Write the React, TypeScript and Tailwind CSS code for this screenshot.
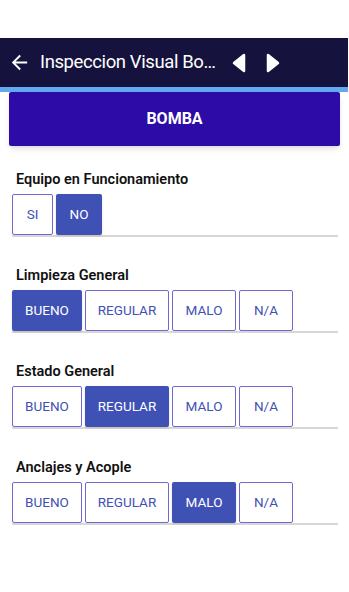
import React, { useState } from 'react';

type Option = { label: string; w: string };

const ESTADO: Option[] = [
  { label: 'BUENO', w: 'w-[70px]' },
  { label: 'REGULAR', w: 'w-[84px]' },
  { label: 'MALO', w: 'w-[64px]' },
  { label: 'N/A', w: 'w-[54px]' },
];

const SI_NO: Option[] = [
  { label: 'SI', w: 'w-[41px]' },
  { label: 'NO', w: 'w-[46px]' },
];

const ITEMS = [
  { title: 'Equipo en Funcionamiento', options: SI_NO, selected: 'NO' },
  { title: 'Limpieza General', options: ESTADO, selected: 'BUENO' },
  { title: 'Estado General', options: ESTADO, selected: 'REGULAR' },
  { title: 'Anclajes y Acople', options: ESTADO, selected: 'MALO' },
];

const Triangle = ({ dir }: { dir: 'left' | 'right' }) => (
  <svg width="14" height="20" viewBox="0 0 14 20">
    <polygon
      points={dir === 'left' ? '12,2 12,18 2,10' : '2,2 2,18 12,10'}
      fill="#fff"
      stroke="#fff"
      strokeWidth="2.5"
      strokeLinejoin="round"
    />
  </svg>
);

const ToggleGroup = ({ options, initial }: { options: Option[]; initial: string }) => {
  const [value, setValue] = useState(initial);
  return (
    <div className="flex gap-[3px] border-b-2 border-[#d7d7d7]">
      {options.map((opt) => {
        const active = opt.label === value;
        return (
          <button
            key={opt.label}
            onClick={() => setValue(opt.label)}
            className={
              active
                ? `${opt.w} h-[41px] rounded-[2px] bg-[#3f51b5] text-white text-[13.5px] shadow-sm`
                : `${opt.w} h-[41px] rounded-[2px] border border-[#6e69cf] bg-white text-[#3f51b5] text-[13.5px]`
            }
          >
            {opt.label}
          </button>
        );
      })}
    </div>
  );
};

export default function App() {
  return (
    <div className="w-[349px] h-[592px] bg-white overflow-hidden" style={{ fontFamily: 'Roboto, "Noto Sans", sans-serif' }}>
      <div className="h-[38px]" />
      <div className="w-[348px] h-[49px] bg-[#15123d] flex items-center">
        <svg className="ml-[8px]" width="23" height="23" viewBox="0 0 24 24">
          <path fill="#fff" d="M20 11H7.83l5.59-5.59L12 4l-8 8 8 8 1.41-1.41L7.83 13H20v-2z" />
        </svg>
        <div className="ml-[9px] w-[183px] truncate text-white text-[18.5px] tracking-[-0.4px]">Inspeccion Visual Bomba</div>
        <div className="ml-[9px] flex items-center gap-[20px]">
          <Triangle dir="left" />
          <Triangle dir="right" />
        </div>
      </div>
      <div className="w-[348px] h-[5px] bg-[#63a9ef]" />

      <div className="px-[9px]">
        <button className="w-[331px] h-[54px] bg-[#2c0ba6] text-white font-bold text-[16px] rounded-[2px] shadow-md">
          BOMBA
        </button>
      </div>

      <div className="pl-[12px] pr-[11px] pt-[24px] flex flex-col gap-[29px]">
        {ITEMS.map((item) => (
          <div key={item.title} className="flex flex-col">
            <div className="pl-[4px] h-[20px] leading-[20px] text-[14.5px] font-semibold text-[#111]">{item.title}</div>
            <div className="mt-[4px]">
              <ToggleGroup options={item.options} initial={item.selected} />
            </div>
          </div>
        ))}
      </div>
    </div>
  );
}
